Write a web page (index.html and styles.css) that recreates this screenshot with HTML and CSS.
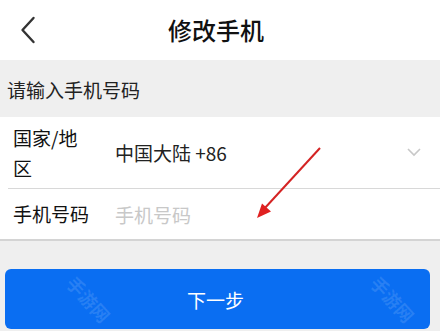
FILE: index.html
```html
<!DOCTYPE html>
<html lang="zh">
<head>
<meta charset="utf-8">
<link rel="stylesheet" href="styles.css">
</head>
<body>
<div class="page">
  <header class="header">
    <div class="back">
      <svg width="16" height="28" viewBox="0 0 16 28"><path d="M13.5 2 L2.5 14 L13.5 26" fill="none" stroke="#333" stroke-width="2.4" stroke-linecap="round" stroke-linejoin="round"/></svg>
    </div>
    <h1 class="title">修改手机</h1>
    <div></div>
  </header>
  <div class="hint">请输入手机号码</div>
  <div class="list">
    <div class="row row-country">
      <div class="label label-wrap">国家/地区</div>
      <div class="value">中国大陆 +86</div>
      <svg class="chev" width="14" height="9" viewBox="0 0 14 9"><path d="M1 1 L7 7 L13 1" fill="none" stroke="#c8c8c8" stroke-width="1.6"/></svg>
    </div>
    <div class="row row-phone">
      <div class="label">手机号码</div>
      <div class="placeholder">手机号码</div>
    </div>
  </div>
  <div class="footer">
    <div class="btn">
      <span>下一步</span>
      <i class="wm wm1">手游网</i>
      <i class="wm wm2">手游网</i>
    </div>
  </div>
  <svg class="arrow" width="440" height="331" viewBox="0 0 440 331">
    <line x1="320" y1="148" x2="264" y2="209" stroke="#d42323" stroke-width="2"/>
    <polygon points="257,218 271,211.5 262,203.5" fill="#e02020"/>
  </svg>
</div>
</body>
</html>
```
FILE: styles.css
```css
* { box-sizing: border-box; margin: 0; padding: 0; }
html, body { width: 440px; height: 331px; overflow: hidden; }
body {
  font-family: "Noto Sans CJK SC", "Noto Sans", sans-serif;
  background: #efefef;
  color: #1a1a1a;
}
.page { position: relative; width: 440px; height: 331px; display: flex; flex-direction: column; }
.header {
  height: 60px;
  background: #fff;
  display: grid;
  grid-template-columns: 56px 1fr 64px;
  align-items: center;
}
.back { padding-left: 20px; display: flex; align-items: center; height: 28px; }
.title {
  text-align: center;
  font-size: 24px;
  font-weight: 500;
  color: #111;
  line-height: 1;
}
.hint {
  height: 57px;
  display: flex;
  align-items: center;
  padding-left: 7px;
  font-size: 19px;
  color: #222;
  padding-top: 1px;
}
.list {
  background: #fff;
  border-bottom: 2px solid #d4d4d4;
}
.row {
  display: flex;
  align-items: center;
  margin-left: 8px;
  font-size: 19px;
}
.row-country { height: 72px; border-bottom: 1px solid #d8d8d8; }
.row-phone { height: 50px; }
.label {
  flex: 0 0 107px;
  padding-left: 5px;
  color: #111;
  line-height: 30px;
}
.label-wrap { padding-right: 30px; }
.value { color: #222; }
.placeholder { color: #c8c8c8; }
.chev { margin-left: auto; margin-right: 19px; }
.footer { flex: 1; padding: 28px 10px 0 5px; }
.btn {
  position: relative;
  height: 60px;
  background: #0a6ef2;
  border-radius: 6px;
  color: #fff;
  font-size: 19px;
  display: flex;
  align-items: center;
  justify-content: center;
  padding-right: 4px;
}
.wm {
  position: absolute;
  top: 21px;
  width: 54px;
  height: 18px;
  line-height: 18px;
  font-style: normal;
  font-size: 18px;
  font-weight: 700;
  color: rgba(255, 255, 255, 0.12);
  transform: rotate(48deg);
  white-space: nowrap;
}
.wm1 { left: 57px; }
.wm2 { left: 361px; }
.arrow { position: absolute; left: 0; top: 0; pointer-events: none; }
```
